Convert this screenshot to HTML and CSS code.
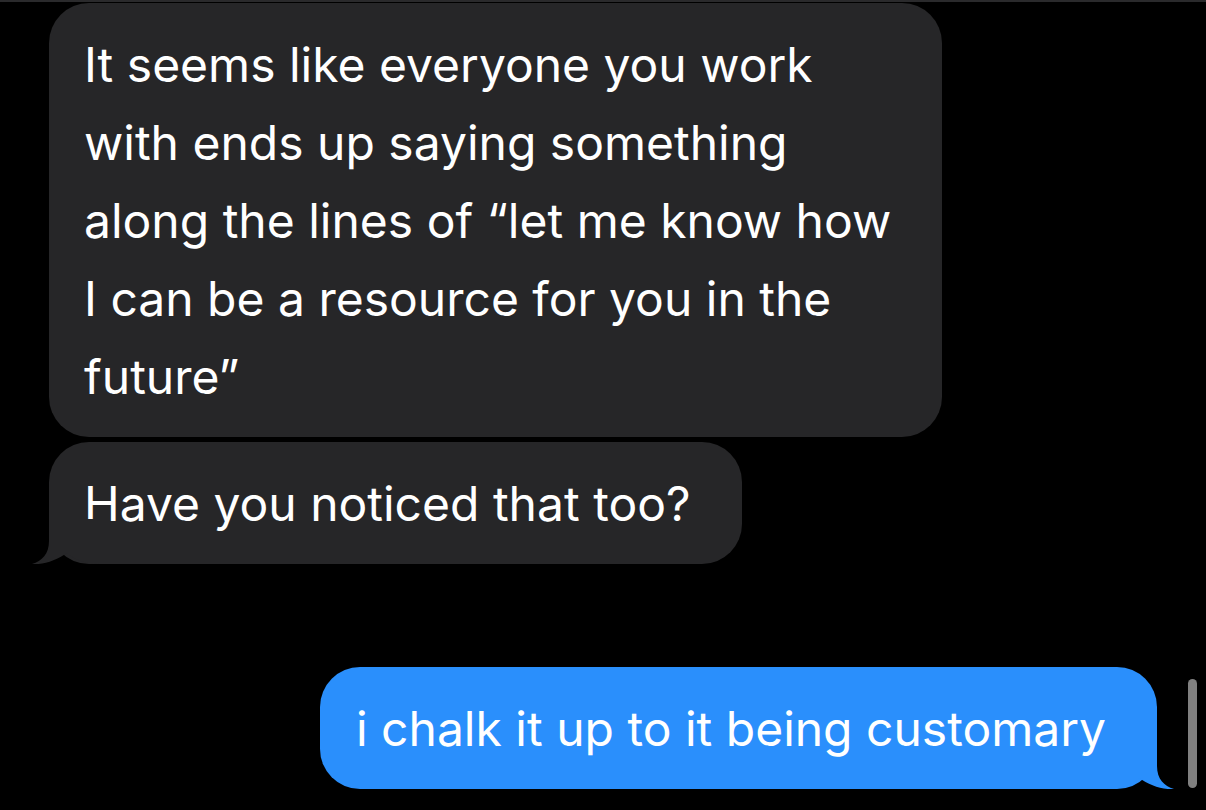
FILE: index.html
```html
<!DOCTYPE HTML>
<html>
  <head>
    <meta http-equiv="Content-Type" content="text/html; charset=utf-8" />
    <link rel="stylesheet" href="styles.css">
  </head>
  <body>
    <div class="screen">
      <div class="thread">
        <div class="msg in">It seems like everyone you work<br>with ends up saying something<br>along the lines of “let me know how<br>I can be a resource for you in the<br>future”</div>
        <div class="msg in last">Have you noticed that too?
          <svg class="tail" width="70" height="45" viewBox="0 0 70 45"><path d="M17,0 L17,22 C17,35 10,42 0,45 C12,46 25,41 35,34 C42,40 52,45 68,45 L70,45 L70,0 Z"/></svg>
        </div>
        <div class="msg out last">i chalk it up to it being customary
          <svg class="tail" width="70" height="45" viewBox="0 0 70 45"><path d="M17,0 L17,22 C17,35 10,42 0,45 C12,46 25,41 35,34 C42,40 52,45 68,45 L70,45 L70,0 Z"/></svg>
        </div>
      </div>
      <div class="scrollbar"></div>
    </div>
  </body>
</html>
```

FILE: styles.css
```css
body       { background: #000; margin: 0; font-family: Inter, "Noto Sans", sans-serif; }
.screen    { position: relative; height: 808px; border-top: 2px solid #2a2a2c; overflow: hidden; }
.thread    { display: flex; flex-direction: column; align-items: flex-start; padding: 1px 49px 0; }
.msg       { position: relative; color: #fff; font-size: 48px; line-height: 78px; padding: 23px 51px 21px 35px; border-radius: 40px; white-space: nowrap; }
.msg + .msg { margin-top: 5px; }
.in        { background: #262628; }
.in .tail  { position: absolute; left: -17px; bottom: 0; fill: #262628; }
.out       { background: #2a8ffc; align-self: flex-end; margin-top: 103px !important; padding-left: 36px; }
.out .tail { position: absolute; right: -17px; bottom: 0; fill: #2a8ffc; transform: scaleX(-1); }
.scrollbar { position: absolute; left: 1188px; top: 677px; width: 9px; height: 109px; border-radius: 5px; background: #808080; }
```
